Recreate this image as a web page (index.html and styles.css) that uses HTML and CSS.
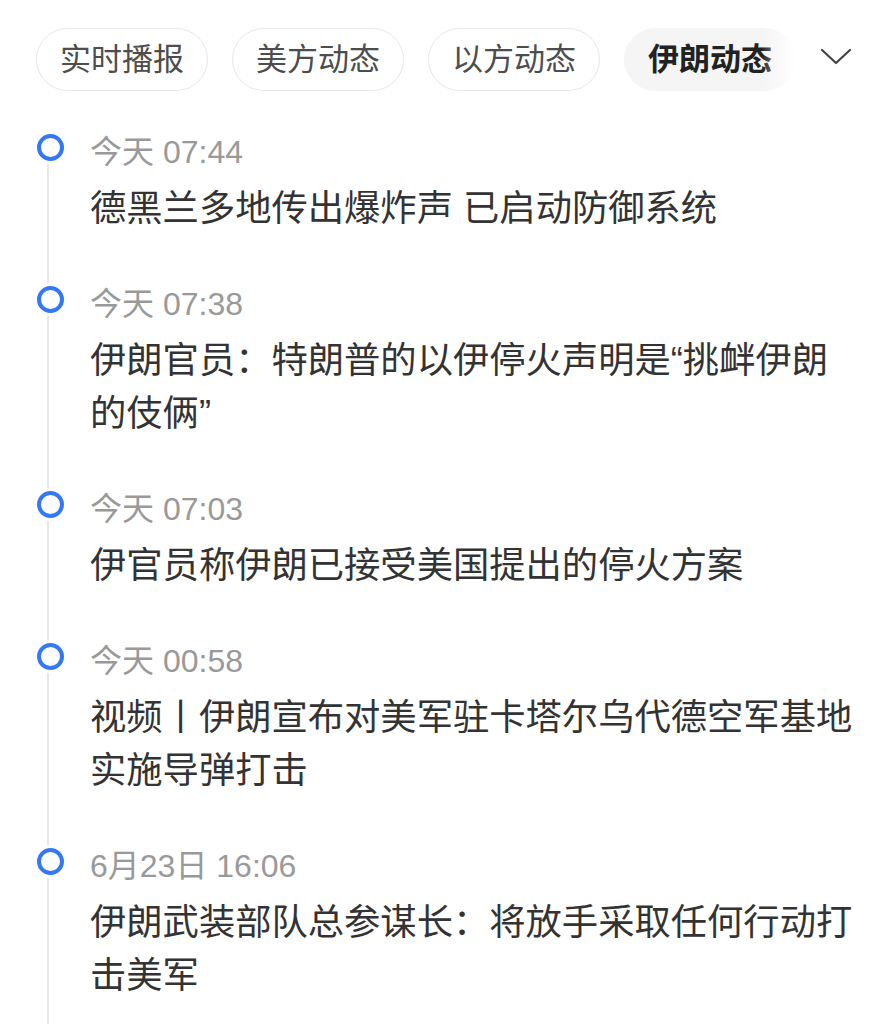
FILE: index.html
```html
<!DOCTYPE html>
<html lang="zh-CN">
<head>
  <meta charset="UTF-8" />
  <meta name="viewport" content="width=device-width, initial-scale=1.0"/>
  <title>伊朗动态</title>
  <link rel="stylesheet" href="styles.css">
</head>
<body>

  <!-- tabs -->
  <div class="tabs">
    <div class="tab-scroll">
      <div class="tab">实时播报</div>
      <div class="tab">美方动态</div>
      <div class="tab">以方动态</div>
      <div class="tab active">伊朗动态</div>
    </div>
    <div class="more">
      <svg width="32" height="18" viewBox="0 0 32 18">
        <polyline points="2,2 16,15 30,2" fill="none" stroke="#444" stroke-width="2.2" stroke-linecap="round" stroke-linejoin="round"/>
      </svg>
    </div>
  </div>

  <!-- timeline -->
  <div class="timeline">
    <div class="item">
      <div class="time">今天 07:44</div>
      <div class="title">德黑兰多地传出爆炸声 已启动防御系统</div>
    </div>
    <div class="item">
      <div class="time">今天 07:38</div>
      <div class="title">伊朗官员：特朗普的以伊停火声明是“挑衅伊朗的伎俩”</div>
    </div>
    <div class="item">
      <div class="time">今天 07:03</div>
      <div class="title">伊官员称伊朗已接受美国提出的停火方案</div>
    </div>
    <div class="item">
      <div class="time">今天 00:58</div>
      <div class="title">视频丨伊朗宣布对美军驻卡塔尔乌代德空军基地实施导弹打击</div>
    </div>
    <div class="item">
      <div class="time">6月23日 16:06</div>
      <div class="title">伊朗武装部队总参谋长：将放手采取任何行动打击美军</div>
    </div>
  </div>

</body>
</html>
```

FILE: styles.css
```css
* { box-sizing: border-box; }
body {
  margin: 0;
  padding: 0;
  background: #fff;
  font-family: "Liberation Sans", "Noto Sans CJK SC", sans-serif;
  color: #333;
  overflow: hidden;
}

/* tabs */
.tabs {
  display: flex;
  align-items: center;
  padding: 28px 18px 0 36px;
}
.tab-scroll {
  flex: 1;
  display: flex;
  gap: 24px;
  overflow: hidden;
  position: relative;
}
.tab-scroll::after {
  content: "";
  position: absolute;
  right: 0;
  top: 0;
  bottom: 0;
  width: 34px;
  background: linear-gradient(to right, rgba(255,255,255,0), #fff);
}
.tab {
  flex: none;
  height: 63px;
  line-height: 61px;
  padding: 0 23px;
  border: 1px solid #e6e6e6;
  border-radius: 32px;
  font-size: 31px;
  color: #4d4d4d;
  white-space: nowrap;
}
.tab.active {
  background: #f5f5f5;
  border-color: #f5f5f5;
  color: #222;
  font-weight: bold;
}
.more {
  width: 80px;
  display: flex;
  justify-content: center;
  align-items: center;
  height: 63px;
  padding-bottom: 5px;
}

/* timeline */
.timeline {
  margin-top: 43px;
  margin-left: 47px;
  border-left: 2px solid #e8e8e8;
  padding-right: 20px;
}
.item {
  position: relative;
  padding: 0 0 51px 41px;
}
.item::before {
  content: "";
  position: absolute;
  left: -12px;
  top: 0;
  width: 19px;
  height: 19px;
  border: 4px solid #3478f6;
  border-radius: 50%;
  background: #fff;
  box-shadow: 0 0 0 3px #fff;
}
.time {
  font-size: 32px;
  line-height: 36px;
  color: #999;
  margin-bottom: 12px;
}
.title {
  font-size: 36.3px;
  line-height: 53px;
  color: #333;
  max-width: 766px;
}
```
